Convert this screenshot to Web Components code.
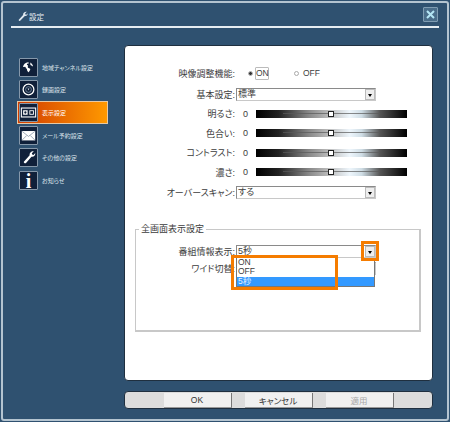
<!DOCTYPE html>
<html lang="ja">
<head>
<meta charset="utf-8">
<title>設定</title>
<style>
  html, body { margin: 0; background: #2f5170; }
  body { font-family: "Liberation Sans", "Noto Sans CJK JP", sans-serif; font-size: 9px; color: #3c3c3c; font-feature-settings: "palt"; }
</style>
</head>
<body>
<settings-dialog heading="設定">
  <nav-item slot="nav" label="地域チャンネル設定">
    <svg viewBox="0 0 19 19"><path fill="#fff" d="M9 3.500c-3 .3-5.400 2.600-5.600 5.400 1 .4 1.400-.6 2.300-.3.8.3.5 1.600 1.500 2 .9.4.5 2.200 1.200 3.200.5.8 1.300 1.200 1.600.7.3-1.600 1.800-2 1.400-3.400-.3-.9-1.900-.8-2.600-1.600-.5-.7.4-1.200.1-2.100-.3-.7-1.300-.5-1.200-1.400.1-.8 1.300-1 1.900-.9.5-.6.2-1.400-.6-1.600zM11.400 3.800c-.2.7.6 1.500.2 2.200-.3.6.4 1.200 1.100 1.400.8.2 1.200 1 1.900 1-.2-2-1.400-3.800-3.200-4.600z"/></svg>
  </nav-item>
  <nav-item slot="nav" label="録画設定">
    <svg viewBox="0 0 19 19"><circle cx="9.500" cy="9.500" r="6" fill="none" stroke="#fff" stroke-width="1.400"/><circle cx="9.500" cy="9.500" r="3.200" fill="none" stroke="#8fa3b5" stroke-width=".8"/><path d="M8.500 8.500h2l-1 2z" fill="#d5dde5"/></svg>
  </nav-item>
  <nav-item slot="nav" label="表示設定" active>
    <svg viewBox="0 0 19 19"><rect x="1.500" y="4.500" width="16" height="10" fill="none" stroke="#fff" stroke-width="1.200"/><rect x="3.500" y="7" width="5" height="5" fill="#fff"/><circle cx="6" cy="9.500" r="1.300" fill="#12203a"/><rect x="11" y="7.500" width="4" height="4" fill="none" stroke="#fff"/></svg>
  </nav-item>
  <nav-item slot="nav" label="メール予約設定">
    <svg viewBox="0 0 19 19"><rect x="2" y="4.500" width="15" height="10.500" fill="#fff"/><path d="M2.500 5l7 5.500 7-5.500M2.500 14.500l5-5M16.500 14.500l-5-5" fill="none" stroke="#7c8ca0" stroke-width=".8"/></svg>
  </nav-item>
  <nav-item slot="nav" label="その他の設定">
    <svg viewBox="0 0 19 19"><path fill="#fff" d="M15.500 2.500l-2.300 2.200.4 1.500 1.500.4 2-2.200c.2 2.500-1.700 4.700-4.300 4.200L6.500 15.800c-.8.8-2.800-.5-2.200-1.600l6.500-7.200C10.300 4.300 12.800 2 15.500 2.500z"/></svg>
  </nav-item>
  <nav-item slot="nav" label="お知らせ">
    <span style="display:block;font:bold 20px/18px 'Liberation Serif',serif;color:#fff;text-align:center">i</span>
  </nav-item>

  <form-row label="映像調整機能:">
    <radio-pair></radio-pair>
  </form-row>
  <form-row label="基本設定:" style="margin-top:1px">
    <tv-select value="標準"></tv-select>
  </form-row>
  <form-row label="明るさ:" style="--row-h:19.5px"><tv-slider></tv-slider></form-row>
  <form-row label="色合い:" style="--row-h:19.5px"><tv-slider></tv-slider></form-row>
  <form-row label="コントラスト:" style="--row-h:19.5px"><tv-slider></tv-slider></form-row>
  <form-row label="濃さ:" style="--row-h:19.5px"><tv-slider></tv-slider></form-row>
  <form-row label="オーバースキャン:">
    <tv-select value="する"></tv-select>
  </form-row>

  <tv-group heading="全画面表示設定">
    <form-row label="番組情報表示:" style="--row-h:15px">
      <tv-select value="5秒" open>
        <tv-option>ON</tv-option>
        <tv-option>OFF</tv-option>
        <tv-option selected>5秒</tv-option>
      </tv-select>
    </form-row>
    <form-row label="ワイド切替:" style="--row-h:19px">
      <tv-select value=""></tv-select>
    </form-row>
  </tv-group>

  <tv-button slot="actions">OK</tv-button>
  <tv-button slot="actions">キャンセル</tv-button>
  <tv-button slot="actions" disabled>適用</tv-button>
</settings-dialog>

<script>
  // Outer window: title bar, side menu, white panel and button bar
  class SettingsDialog extends HTMLElement {
    constructor() {
      super();
      const shadow = this.attachShadow({ mode: "open" });
      shadow.innerHTML = `
        <style>
          :host { display: block; width: 450px; height: 422px; box-sizing: border-box; padding: 1px; background: #2f5170; }
          .frame { height: 100%; box-sizing: border-box; border: 2px solid #b4c4d0; border-radius: 3px; display: flex; flex-direction: column; }
          header { display: flex; align-items: center; height: 23px; margin: 0 8px; padding: 0 1px 0 6px; border-bottom: 2px solid #e6edf2; flex: none; gap: 1px; }
          header svg { width: 11px; height: 11px; flex: none; margin-top: 4px; }
          h1 { margin: 4px 0 0; flex: 1; font: 400 7.500px "Liberation Sans", "Noto Sans CJK JP", sans-serif; color: #e8eef3; }
          .close { width: 15px; height: 15px; box-sizing: border-box; background: #4a6d8a; border: 1px solid #7f9cb2; display: flex; align-items: center; justify-content: center; border-radius: 1px; }
          .close svg { width: 9px; height: 9px; margin: 0; }
          .body { display: flex; padding-top: 17px; }
          nav { width: 107px; padding: 11px 0 0 14px; display: flex; flex-direction: column; }
          main { width: 309px; display: flex; flex-direction: column; gap: 10px; }
          .panel { height: 336px; box-sizing: border-box; background: #fff; border: 1px solid #1f2f3f; border-radius: 4px; padding-top: 17px; }
          .actions { height: 16px; background: #dcdcdc; border: 1px solid #1f2f3f; border-radius: 4px; display: flex; justify-content: center; gap: 13px; }
        </style>
        <div class="frame">
          <header>
            <svg viewBox="0 0 19 19"><path fill="#dfe8ef" d="M17 1.500l-3 2.800.5 1.700 1.700.4 2.300-2.600c.2 3-2 5.300-5 4.700L5.500 16.800c-1 .9-3.300-.7-2.500-1.900l7.500-8.200C9.800 3.500 13.500.9 17 1.500z"/></svg>
            <h1></h1>
            <div class="close"><svg viewBox="0 0 9 9"><path d="M1 1l7 7M8 1L1 8" stroke="#b4e6f5" stroke-width="2"/></svg></div>
          </header>
          <div class="body">
            <nav><slot name="nav"></slot></nav>
            <main>
              <section class="panel"><slot></slot></section>
              <div class="actions"><slot name="actions"></slot></div>
            </main>
          </div>
        </div>`;
      shadow.querySelector("h1").textContent = this.getAttribute("heading");
    }
  }
  customElements.define("settings-dialog", SettingsDialog);

  // One entry in the side menu, the icon goes in the slot
  class NavItem extends HTMLElement {
    constructor() {
      super();
      const shadow = this.attachShadow({ mode: "open" });
      shadow.innerHTML = `
        <style>
          :host { display: flex; align-items: center; width: 91px; height: 22.6px; box-sizing: border-box; padding-left: 2px; gap: 4px; color: #dbe3ea; font-size: 6px; white-space: nowrap; }
          :host([active]) { background: linear-gradient(90deg, #d23c00, #ff9a00); box-shadow: inset 0 0 0 1px #e6c9a5; color: #fff; }
          .icon { width: 19px; height: 19px; box-sizing: border-box; flex: none; background: #10203a; border: 1px solid #8698aa; border-radius: 1px; overflow: hidden; }
          ::slotted(svg) { display: block; width: 17px; height: 17px; }
        </style>
        <div class="icon"><slot></slot></div>
        <span></span>`;
      shadow.querySelector("span").textContent = this.getAttribute("label");
    }
  }
  customElements.define("nav-item", NavItem);

  // Label on the left, right aligned, control on the right
  class FormRow extends HTMLElement {
    constructor() {
      super();
      const shadow = this.attachShadow({ mode: "open" });
      shadow.innerHTML = `
        <style>
          :host { display: flex; align-items: center; height: var(--row-h, 20px); gap: 1px; }
          .label { width: var(--label-w, 110px); flex: none; text-align: right; white-space: nowrap; }
        </style>
        <span class="label"></span>
        <slot></slot>`;
      shadow.querySelector(".label").textContent = this.getAttribute("label");
    }
  }
  customElements.define("form-row", FormRow);

  class RadioPair extends HTMLElement {
    constructor() {
      super();
      const shadow = this.attachShadow({ mode: "open" });
      shadow.innerHTML = `
        <style>
          :host { display: flex; align-items: center; padding-left: 12px; font-size: 8.5px; }
          i { width: 5px; height: 5px; border: 1px solid #aaa; border-radius: 50%; box-sizing: border-box; display: block; }
          i.on { background: #333; border-color: #bbb; }
          .on-text { margin-left: 2px; width: 14px; text-align: center; line-height: 11px; border: 1px solid #bbb; border-radius: 1px; box-sizing: border-box; }
          .off { margin-left: 25px; }
          .off-text { margin-left: 4px; }
        </style>
        <i class="on"></i><span class="on-text">ON</span>
        <i class="off"></i><span class="off-text">OFF</span>`;
    }
  }
  customElements.define("radio-pair", RadioPair);

  // Drop down, list is shown over the next rows with the open attribute
  class TvSelect extends HTMLElement {
    constructor() {
      super();
      const shadow = this.attachShadow({ mode: "open" });
      shadow.innerHTML = `
        <style>
          :host { display: block; position: relative; width: 140px; height: 13px; box-sizing: border-box; background: #fff; border: 1px solid #8a8a8a; border-right-color: #c8c8c8; border-bottom-color: #c8c8c8; line-height: 11px; padding-left: 1px; }
          .arrow { position: absolute; right: 0; top: 0; bottom: 0; width: 10px; background: #eeeeee; border: 1px solid #bbb; box-sizing: border-box; }
          .arrow::after { content: ""; position: absolute; left: 2px; top: 4px; border: 2px solid transparent; border-top: 3px solid #000; }
          .list, .mark-arrow, .mark-list { display: none; }
          :host([open]) .list { display: block; position: absolute; z-index: 2; left: -1px; right: 0; top: 12px; background: #fff; border: 1px solid #777; border-top: 0; font-size: 8.5px; }
          :host([open]) .mark-arrow { display: block; position: absolute; z-index: 3; right: -4px; top: -5px; width: 12px; height: 14px; border: 3px solid #f57c00; }
          :host([open]) .mark-list { display: block; position: absolute; z-index: 3; left: -6px; top: 9px; width: 101px; height: 29px; border: 3px solid #f57c00; }
        </style>
        <span class="value"></span>
        <div class="arrow"></div>
        <div class="list"><slot></slot></div>
        <div class="mark-arrow"></div>
        <div class="mark-list"></div>`;
      shadow.querySelector(".value").textContent = this.getAttribute("value");
    }
  }
  customElements.define("tv-select", TvSelect);

  class TvOption extends HTMLElement {
    constructor() {
      super();
      const shadow = this.attachShadow({ mode: "open" });
      shadow.innerHTML = `
        <style>
          :host { display: block; height: 9.300px; line-height: 9px; padding-left: 1px; }
          :host([selected]) { background: #3399ff; color: #e8f3ff; }
        </style>
        <slot></slot>`;
    }
  }
  customElements.define("tv-option", TvOption);

  // Slider with the number in front, bar fades black to white to black
  class TvSlider extends HTMLElement {
    constructor() {
      super();
      const shadow = this.attachShadow({ mode: "open" });
      shadow.innerHTML = `
        <style>
          :host { display: flex; align-items: center; }
          .num { width: 19px; text-align: center; font-size: 9px; }
          .bar { position: relative; width: 151px; height: 8px; margin-left: 1px; background: linear-gradient(90deg, #000 0%, #222 15%, #888 35%, #bbb 48%, #eef6fc 62%, #cfdde5 70%, #555 82%, #000 100%); }
          .bar::before { content: ""; position: absolute; left: 18%; right: 18%; top: 3px; height: 1px; background: rgba(90,90,90,.7); }
          .thumb { position: absolute; left: 72px; top: 1px; width: 6px; height: 6px; box-sizing: border-box; background: #fff; border: 1px solid #222; }
        </style>
        <span class="num">0</span>
        <div class="bar"><div class="thumb"></div></div>`;
    }
  }
  customElements.define("tv-slider", TvSlider);

  // Group box with the heading sitting on the top border
  class TvGroup extends HTMLElement {
    constructor() {
      super();
      const shadow = this.attachShadow({ mode: "open" });
      shadow.innerHTML = `
        <style>
          :host { display: block; margin: 24px 11px 0 10px; --label-w: 99px; }
          fieldset { margin: 0; padding: 11px 0 0; height: 106px; box-sizing: border-box; border: 1px solid #c8c8c8; border-width: 1px 2px 2px 1px; }
          legend { margin-left: 3px; padding: 0 2px; line-height: 7px; }
        </style>
        <fieldset><legend></legend><slot></slot></fieldset>`;
      shadow.querySelector("legend").textContent = this.getAttribute("heading");
    }
  }
  customElements.define("tv-group", TvGroup);

  class TvButton extends HTMLElement {
    constructor() {
      super();
      const shadow = this.attachShadow({ mode: "open" });
      shadow.innerHTML = `
        <style>
          :host { display: flex; align-items: center; justify-content: center; width: 68px; height: 15px; margin-top: 1px; box-sizing: border-box; background: #f0f0f0; border-right: 1px solid #777; border-bottom: 1px solid #999; font-size: 8.500px; color: #333; }
          :host([disabled]) { color: #a8a8a8; }
        </style>
        <slot></slot>`;
    }
  }
  customElements.define("tv-button", TvButton);
</script>
</body>
</html>
